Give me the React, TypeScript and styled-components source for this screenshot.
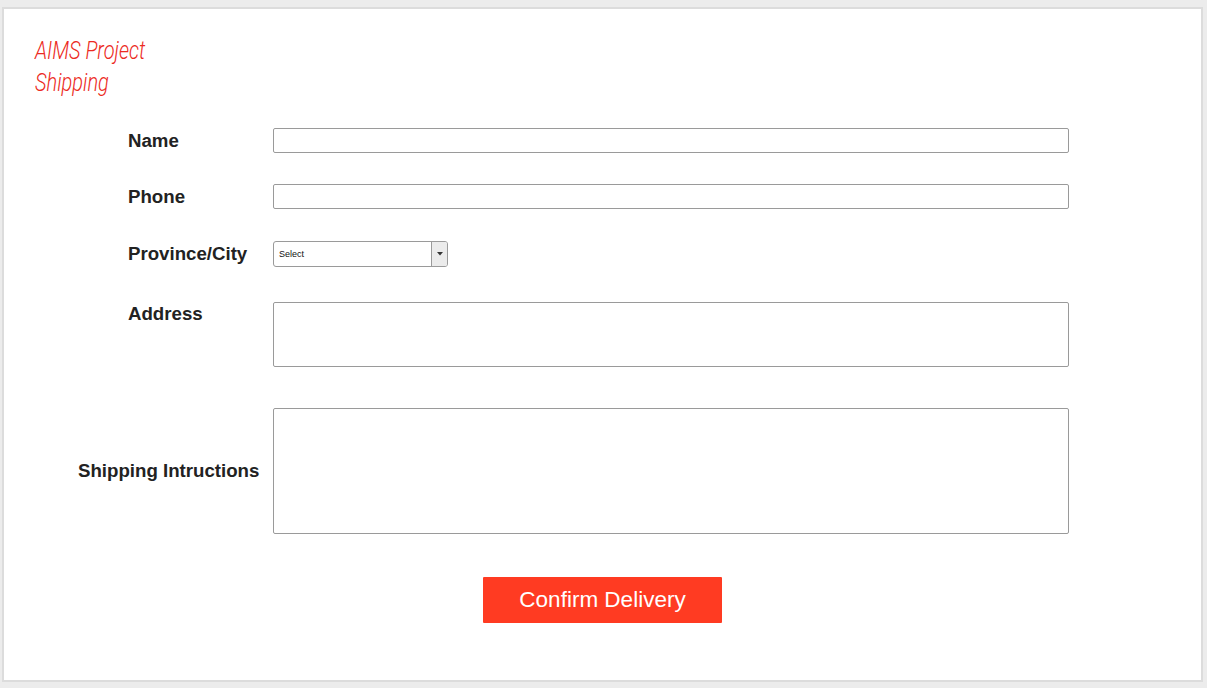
import styled, { createGlobalStyle } from "styled-components";

const GlobalStyle = createGlobalStyle`
  html, body {
    margin: 0;
    padding: 0;
    background: #ececec;
  }
  body {
    font-family: "Liberation Sans", Arial, sans-serif;
  }
`;

const App = () => {
  return (
    <>
      <GlobalStyle />
      <Card>
        <Title>
          <TitleLine>AIMS Project</TitleLine>
          <TitleLine>Shipping</TitleLine>
        </Title>
        <Form>
          <Row $top={29}>
            <Label>Name</Label>
            <TextInput />
          </Row>
          <Row $top={31}>
            <Label>Phone</Label>
            <TextInput />
          </Row>
          <Row $top={32}>
            <Label>Province/City</Label>
            <SelectBox>
              <SelectText>Select</SelectText>
              <ArrowBox>
                <svg width="6" height="4" viewBox="0 0 6 4">
                  <path d="M0 0h6L3 3.5z" fill="#333" />
                </svg>
              </ArrowBox>
            </SelectBox>
          </Row>
          <Row $top={35} $align="flex-start">
            <Label $offset={1}>Address</Label>
            <TextArea $height={65} />
          </Row>
          <Row $top={41}>
            <Label $flush>Shipping Intructions</Label>
            <TextArea $height={126} />
          </Row>
        </Form>
        <ButtonRow>
          <ConfirmButton>Confirm Delivery</ConfirmButton>
        </ButtonRow>
      </Card>
    </>
  );
};

const Card = styled.div`
  margin: 7px 4px 0 2px;
  height: 671px;
  background: #ffffff;
  border: 2px solid #dcdcdc;
  display: flex;
  flex-direction: column;
`;

const Title = styled.h1`
  margin: 26px 0 0 31px;
  display: flex;
  flex-direction: column;
  align-items: flex-start;
  font-family: Roboto, "Liberation Sans", sans-serif;
  font-style: italic;
  font-weight: 300;
  font-size: 25px;
  line-height: 32px;
  color: #ec2a22;
`;

const TitleLine = styled.span`
  display: block;
  transform: scaleX(0.8);
  transform-origin: left center;
  white-space: nowrap;
`;

const Form = styled.div`
  display: flex;
  flex-direction: column;
  margin-left: 74px;
`;

const Row = styled.div<{ $top: number; $align?: string }>`
  display: flex;
  align-items: ${(p) => p.$align || "center"};
  margin-top: ${(p) => p.$top}px;
`;

const Label = styled.label<{ $flush?: boolean; $offset?: number }>`
  width: ${(p) => (p.$flush ? 195 : 145)}px;
  padding-left: ${(p) => (p.$flush ? 0 : 50)}px;
  padding-top: ${(p) => p.$offset || 0}px;
  font-size: 18.67px;
  font-weight: 700;
  line-height: 22px;
  color: #222222;
  white-space: nowrap;
`;

const TextInput = styled.div`
  width: 794px;
  height: 23px;
  border: 1px solid #9a9a9a;
  border-radius: 2px;
  background: #fff;
`;

const TextArea = styled.div<{ $height: number }>`
  width: 794px;
  height: ${(p) => p.$height - 2}px;
  border: 1px solid #9a9a9a;
  border-radius: 2px;
  background: #fff;
`;

const SelectBox = styled.div`
  width: 173px;
  height: 24px;
  border: 1px solid #9a9a9a;
  border-radius: 3px;
  display: flex;
  align-items: center;
  overflow: hidden;
`;

const SelectText = styled.span`
  flex: 1;
  padding-left: 5px;
  font-size: 9px;
  color: #111;
`;

const ArrowBox = styled.span`
  width: 15px;
  height: 100%;
  border-left: 1px solid #9a9a9a;
  background: #ebebeb;
  display: flex;
  align-items: center;
  justify-content: center;
`;

const ButtonRow = styled.div`
  display: flex;
  justify-content: center;
  margin-top: 43px;
`;

const ConfirmButton = styled.button`
  width: 239px;
  height: 46px;
  border: none;
  border-radius: 1px;
  background: #ff3b22;
  color: #ffffff;
  font-family: "Liberation Sans", Arial, sans-serif;
  font-size: 22.5px;
  cursor: pointer;
`;

export default App;
